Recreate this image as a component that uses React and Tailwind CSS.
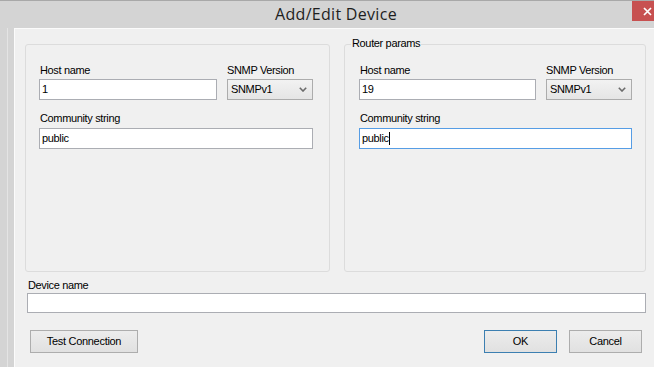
import React from 'react';

// Small Win8-style form controls
const Label = ({ children, className = '' }) => (
  <div className={`h-[13px] leading-[13px] text-[11px] tracking-[-0.35px] text-black whitespace-nowrap ${className}`}>{children}</div>
);

const TextBox = ({ value, focused, className = '' }) => (
  <div
    className={`h-[21px] bg-white border flex items-center pl-[2px] text-[11px] tracking-[-0.35px] leading-[13px] ${
      focused ? 'border-[#569de5]' : 'border-[#abadb3]'
    } ${className}`}
  >
    <span>{value}</span>
    {focused && <span className="w-px h-[13px] bg-black" />}
  </div>
);

const ComboBox = ({ value }) => (
  <div className="h-[21px] w-[86px] border border-[#acacac] bg-linear-to-b from-[#f2f2f2] to-[#e5e5e5] flex items-center justify-between pl-[3px] pr-[5px] text-[11px] tracking-[-0.35px]">
    <span>{value}</span>
    <svg width="8" height="5" viewBox="0 0 8 5">
      <path d="M0.8 0.8 L4 4 L7.2 0.8" stroke="#6b6b6b" strokeWidth="1.6" fill="none" />
    </svg>
  </div>
);

const Button = ({ children, isDefault, className = '' }) => (
  <button
    className={`h-[23px] bg-linear-to-b from-[#ececec] to-[#e1e1e1] border text-[11px] tracking-[-0.3px] text-black ${
      isDefault ? 'border-[#3c7fb1]' : 'border-[#adadad]'
    } ${className}`}
  >
    {children}
  </button>
);

const DeviceFields = ({ host, community, focused, hostWidth, communityWidth, gap }) => (
  <div className="flex flex-col">
    <div className="flex" style={{ gap }}>
      <div className="flex flex-col gap-[2px]">
        <Label className="pl-px">Host name</Label>
        <TextBox value={host} className={hostWidth} />
      </div>
      <div className="flex flex-col gap-[2px]">
        <Label>SNMP Version</Label>
        <ComboBox value="SNMPv1" />
      </div>
    </div>
    <div className="flex flex-col gap-[3px] mt-[12px]">
      <Label className="pl-px">Community string</Label>
      <TextBox value={community} focused={focused} className={communityWidth} />
    </div>
  </div>
);

export default function App() {
  return (
    <div className="w-[654px] h-[367px] overflow-hidden bg-[#d4d4d4] font-['Liberation_Sans',Arial,sans-serif]">
      <div className="w-[672px] h-[367px] flex flex-col">
        {/* Title bar */}
        <div className="relative h-[28px] border-t border-[#a8a8a8] flex justify-center">
          <span className="leading-[27px] text-[16px] tracking-[0.3px] text-[#1e1e1e] font-['Open_Sans',sans-serif]">
            Add/Edit Device
          </span>
          <div className="absolute top-0 left-[632px] w-[30px] h-[20px] bg-[#c75050] flex items-center justify-center">
            <svg width="9" height="9" viewBox="0 0 9 9">
              <path d="M1 1 L8 8 M8 1 L1 8" stroke="#fff" strokeWidth="1.7" />
            </svg>
          </div>
        </div>

        <div className="flex flex-1">
          {/* Left window frame */}
          <div className="w-[7px]" />
          <div className="w-px bg-[#e4e4e4]" />
          <div className="w-[6px]" />

          {/* Client area */}
          <div className="flex-1 bg-[#f0f0f0] border-t border-l border-[#fbfbfb] flex flex-col">
            <div className="flex gap-[14px] mt-[15px] ml-[10px]">
              <div className="w-[305px] h-[228px] border border-[#dcdcdc] rounded-[3px] pt-[19px] pl-[13px]">
                <DeviceFields
                  host="1"
                  community="public"
                  hostWidth="w-[178px]"
                  communityWidth="w-[274px]"
                  gap="10px"
                />
              </div>
              <div className="relative w-[302px] h-[228px] border border-[#dcdcdc] rounded-[3px] pt-[19px] pl-[14px]">
                <span className="absolute -top-[8px] left-[6px] px-px bg-[#f0f0f0] text-[11px] tracking-[-0.35px] leading-[13px]">
                  Router params
                </span>
                <DeviceFields
                  host="19"
                  community="public"
                  focused
                  hostWidth="w-[177px]"
                  communityWidth="w-[273px]"
                  gap="10px"
                />
              </div>
            </div>

            <div className="flex flex-col gap-px mt-[7px] ml-[12px]">
              <Label className="pl-px">Device name</Label>
              <TextBox value="" className="w-[619px] !h-[20px]" />
            </div>

            <div className="flex mt-[17px] ml-[15px] w-[612px]">
              <Button className="w-[108px]">Test Connection</Button>
              <div className="flex-1" />
              <Button isDefault className="w-[73px]">OK</Button>
              <Button className="w-[73px] ml-[12px]">Cancel</Button>
            </div>
          </div>
        </div>
      </div>
    </div>
  );
}
